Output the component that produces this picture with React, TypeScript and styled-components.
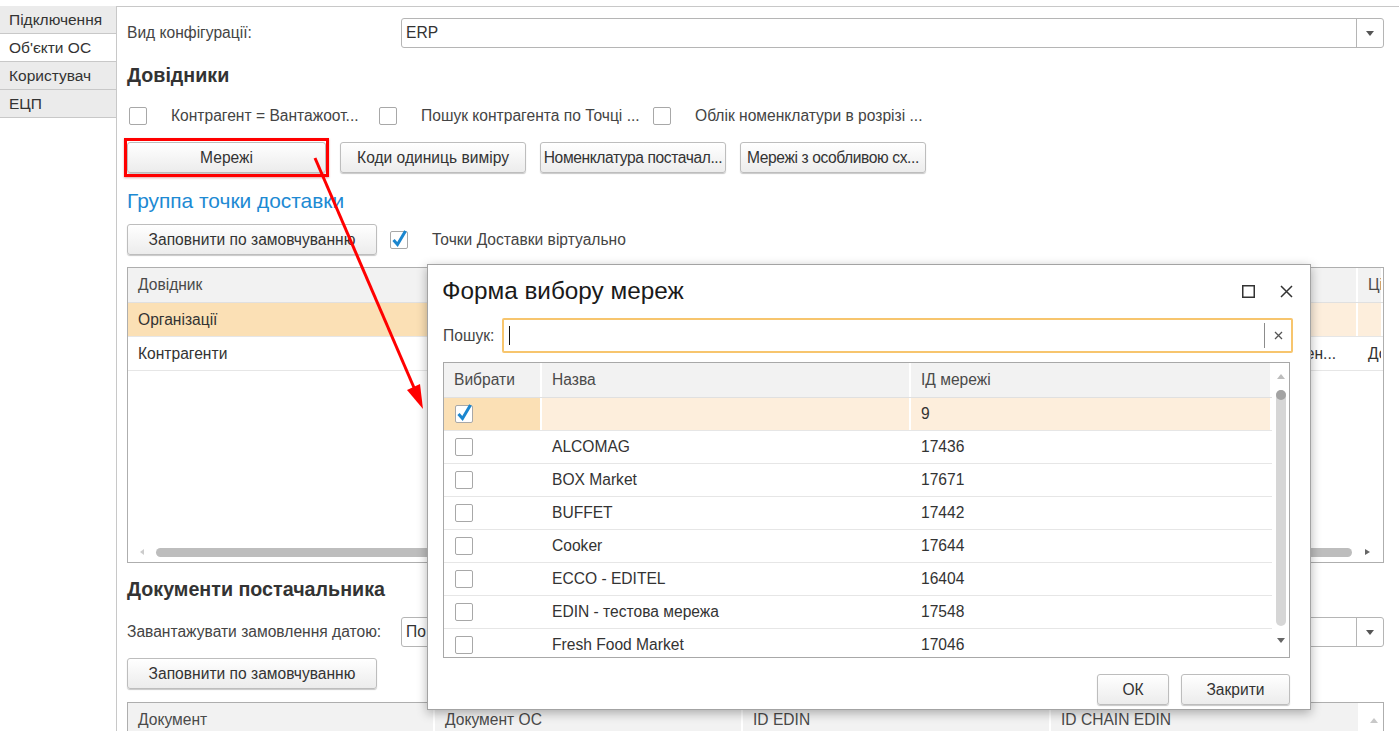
import React from "react";
import styled, { createGlobalStyle } from "styled-components";

const GlobalStyle = createGlobalStyle`
  html, body { margin: 0; padding: 0; background: #fff; }
  body { font-family: "Liberation Sans", Arial, sans-serif; font-size: 15.6px; color: #404040; }
  * { box-sizing: border-box; }
`;

const Page = styled.div`
  position: relative;
  width: 1399px;
  height: 731px;
  overflow: hidden;
  display: flex;
  padding-top: 6px;
  background: #fff;
`;

const TabColumn = styled.nav`
  width: 116px;
  flex: none;
  display: flex;
  flex-direction: column;
`;

const Tab = styled.div<{ $active?: boolean }>`
  height: 28px;
  display: flex;
  align-items: center;
  padding-left: 9px;
  font-size: 15.5px;
  color: #333;
  background: ${(p) => (p.$active ? "#fff" : "#ebebeb")};
  border-bottom: 1px solid #c8c8c8;
`;

const Main = styled.main`
  flex: 1;
  min-width: 0;
  border-left: 1px solid #c8c8c8;
  border-top: 1px solid #c8c8c8;
  padding: 11px 15px 0 10px;
  display: flex;
  flex-direction: column;
`;

const FieldRow = styled.div<{ $mt?: number }>`
  display: flex;
  align-items: center;
  height: 30px;
  flex: none;
  margin-top: ${(p) => p.$mt ?? 0}px;
`;

const FieldLabel = styled.span`
  width: 274px;
  flex: none;
  color: #444;
`;

const Select = styled.div`
  flex: 1;
  height: 30px;
  display: flex;
  border: 1px solid #b5b5b5;
  border-radius: 3px;
  background: #fff;
`;

const SelectText = styled.span`
  flex: 1;
  display: flex;
  align-items: center;
  padding-left: 4px;
  color: #333;
`;

const SelectButton = styled.span`
  width: 27px;
  flex: none;
  border-left: 1px solid #b5b5b5;
  display: flex;
  align-items: center;
  justify-content: center;
`;

const TriDown = styled.span<{ $color?: string }>`
  width: 0;
  height: 0;
  border-left: 4px solid transparent;
  border-right: 4px solid transparent;
  border-top: 5px solid ${(p) => p.$color ?? "#555"};
`;

const TriUp = styled.span<{ $color?: string }>`
  width: 0;
  height: 0;
  border-left: 4px solid transparent;
  border-right: 4px solid transparent;
  border-bottom: 5px solid ${(p) => p.$color ?? "#bbb"};
`;

const TriLeft = styled.span<{ $color?: string }>`
  width: 0;
  height: 0;
  border-top: 3px solid transparent;
  border-bottom: 3px solid transparent;
  border-right: 4px solid ${(p) => p.$color ?? "#ccc"};
`;

const TriRight = styled.span<{ $color?: string }>`
  width: 0;
  height: 0;
  border-top: 3px solid transparent;
  border-bottom: 3px solid transparent;
  border-left: 5px solid ${(p) => p.$color ?? "#666"};
`;

const SectionTitle = styled.h2<{ $mt?: number }>`
  margin: ${(p) => p.$mt ?? 0}px 0 0 0;
  font-size: 19.7px;
  line-height: 22px;
  font-weight: bold;
  color: #333;
  flex: none;
`;

const GroupTitle = styled.h3<{ $mt?: number }>`
  margin: ${(p) => p.$mt ?? 0}px 0 0 0;
  font-size: 20.9px;
  line-height: 24px;
  font-weight: normal;
  color: #1d8ad3;
  flex: none;
`;

const CheckRow = styled.div<{ $mt?: number }>`
  display: flex;
  align-items: center;
  height: 24px;
  flex: none;
  margin-top: ${(p) => p.$mt ?? 0}px;
  padding-left: 2px;
`;

const CheckItem = styled.label<{ $w?: number }>`
  display: flex;
  align-items: center;
  gap: 24px;
  width: ${(p) => (p.$w ? `${p.$w}px` : "auto")};
  flex: none;
  color: #444;
  white-space: nowrap;
`;

const Box = styled.span`
  position: relative;
  width: 18px;
  height: 18px;
  flex: none;
  border: 1px solid #a8a8a8;
  border-radius: 2px;
  background: #fff;
`;

const Tick = styled.svg`
  position: absolute;
  left: -1px;
  top: -1px;
  overflow: visible;
`;

const CheckBox: React.FC<{ checked?: boolean }> = ({ checked }) => (
  <Box>
    {checked && (
      <Tick width="18" height="18" viewBox="0 0 18 18">
        <path d="M3.5 9 L7.5 13.5 L15.5 0" fill="none" stroke="#1b86cf" strokeWidth="3" strokeLinejoin="miter" />
      </Tick>
    )}
  </Box>
);

const ButtonRow = styled.div<{ $mt?: number; $gap?: number }>`
  display: flex;
  align-items: center;
  gap: ${(p) => p.$gap ?? 14}px;
  flex: none;
  margin-top: ${(p) => p.$mt ?? 0}px;
`;

const Button = styled.button<{ $w: number; $mt?: number; $tight?: boolean }>`
  width: ${(p) => p.$w}px;
  height: 31px;
  flex: none;
  margin-top: ${(p) => p.$mt ?? 0}px;
  padding: 0 2px;
  border: 1px solid #bdbdbd;
  border-radius: 3px;
  background: linear-gradient(#ffffff, #ececec);
  box-shadow: 0 1px 1px rgba(0, 0, 0, 0.22);
  font-family: "Liberation Sans", Arial, sans-serif;
  font-size: 15.6px;
  letter-spacing: ${(p) => (p.$tight ? "-0.4px" : "normal")};
  color: #333;
  white-space: nowrap;
  overflow: hidden;
  text-align: center;
`;

const Highlighted = styled.div`
  position: relative;
  flex: none;
  display: flex;
`;

const RedFrame = styled.span`
  position: absolute;
  left: -3px;
  top: -4px;
  right: -3px;
  bottom: -4px;
  border: 3px solid #ff0000;
  box-shadow: 0 1px 2px rgba(160, 0, 0, 0.35);
  pointer-events: none;
`;

const Grid = styled.div<{ $h?: number; $mt?: number }>`
  flex: none;
  margin-top: ${(p) => p.$mt ?? 0}px;
  height: ${(p) => (p.$h ? `${p.$h}px` : "auto")};
  border: 1px solid #aeaeae;
  background: #fff;
  display: flex;
  flex-direction: column;
  overflow: hidden;
`;

const HeaderRow = styled.div<{ $cols: string }>`
  display: grid;
  grid-template-columns: ${(p) => p.$cols};
  height: 35px;
  flex: none;
  border-bottom: 1px solid #e0e0e0;
`;

const HeaderCell = styled.div<{ $plain?: boolean }>`
  display: flex;
  align-items: center;
  padding-left: 10px;
  background: ${(p) => (p.$plain ? "#fff" : "#f2f2f2")};
  border-right: 2px solid #fff;
  color: #4a4a4a;
  white-space: nowrap;
  overflow: hidden;
`;

const DataRow = styled.div<{ $cols: string; $h?: number }>`
  display: grid;
  grid-template-columns: ${(p) => p.$cols};
  height: ${(p) => p.$h ?? 34}px;
  flex: none;
  border-bottom: 1px solid #e6e6e6;
`;

const Cell = styled.div<{ $bg?: string; $pl?: number }>`
  display: flex;
  align-items: center;
  padding-left: ${(p) => p.$pl ?? 10}px;
  background: ${(p) => p.$bg ?? "transparent"};
  border-right: 2px solid #fff;
  color: #333;
  white-space: nowrap;
  overflow: hidden;
`;

const GridBody = styled.div`
  flex: 1;
  display: flex;
  flex-direction: column;
  overflow: hidden;
`;

const HScroll = styled.div`
  height: 20px;
  flex: none;
  display: grid;
  grid-template-columns: 28px 1fr 31px;
  align-items: center;
  justify-items: center;
`;

const HThumb = styled.span`
  justify-self: stretch;
  height: 9px;
  border-radius: 5px;
  background: #bdbdbd;
`;

/* Dialog */
const Dialog = styled.section`
  position: absolute;
  left: 427px;
  top: 264px;
  width: 884px;
  height: 446px;
  background: #fff;
  border: 1px solid #a3a3a3;
  box-shadow: 0 3px 10px rgba(0, 0, 0, 0.3);
  display: flex;
  flex-direction: column;
  padding: 0 17px 0 15px;
  z-index: 2;
`;

const TitleBar = styled.header`
  height: 52px;
  flex: none;
  display: flex;
  align-items: center;
`;

const DialogTitle = styled.h1`
  margin: 0 0 0 -1px;
  flex: 1;
  font-size: 24.3px;
  font-weight: normal;
  color: #1a1a1a;
`;

const TitleIcons = styled.div`
  display: flex;
  align-items: center;
  gap: 25px;
`;

const SearchRow = styled.div`
  margin-top: 1px;
  height: 35px;
  flex: none;
  display: flex;
  align-items: center;
`;

const SearchLabel = styled.span`
  width: 59px;
  flex: none;
  color: #444;
`;

const SearchInput = styled.div`
  flex: 1;
  height: 35px;
  display: flex;
  align-items: center;
  border: 2px solid #f7c56d;
  border-radius: 2px;
`;

const Caret = styled.span`
  width: 1px;
  height: 19px;
  margin-left: 5px;
  background: #111;
`;

const Spacer = styled.span`
  flex: 1;
`;

const ClearBtn = styled.span`
  width: 27px;
  height: 25px;
  flex: none;
  border-left: 1px solid #8c8c8c;
  display: flex;
  align-items: center;
  justify-content: center;
`;

const PickTable = styled.div`
  margin: 9px 3px 0 0;
  height: 296px;
  flex: none;
  border: 1px solid #a8a8a8;
  display: flex;
  overflow: hidden;
`;

const PickMain = styled.div`
  flex: 1;
  display: flex;
  flex-direction: column;
  overflow: hidden;
`;

const VScroll = styled.div`
  width: 17px;
  flex: none;
  display: flex;
  flex-direction: column;
  align-items: center;
  padding-top: 11px;
`;

const VThumb = styled.span`
  position: relative;
  width: 10px;
  height: 236px;
  margin: 11px 0 12px;
  border-radius: 5px;
  background: #d6d6d6;
  &::before {
    content: "";
    position: absolute;
    left: 0;
    top: 0;
    width: 10px;
    height: 10px;
    border-radius: 50%;
    background: #a3a3a3;
  }
`;

const Footer = styled.footer`
  margin: 16px 3px 0 0;
  display: flex;
  justify-content: flex-end;
  gap: 12px;
`;

const Overlay = styled.svg`
  position: absolute;
  left: 0;
  top: 0;
  pointer-events: none;
  z-index: 3;
`;

const topCols = "420px 600px 210px 1fr";
const botCols = "307px 308px 308px 309px 1fr";
const pickCols = "98px 369px 361px";

const networks: [string, string][] = [
  ["ALCOMAG", "17436"],
  ["BOX Market", "17671"],
  ["BUFFET", "17442"],
  ["Cooker", "17644"],
  ["ECCO - EDITEL", "16404"],
  ["EDIN - тестова мережа", "17548"],
  ["Fresh Food Market", "17046"],
];

const SEL_FIRST = "#fbe0b5";
const SEL_REST = "#fdeedc";

export default function App() {
  return (
    <>
      <GlobalStyle />
      <Page>
        <TabColumn>
          <Tab>Підключення</Tab>
          <Tab $active>Об'єкти ОС</Tab>
          <Tab>Користувач</Tab>
          <Tab>ЕЦП</Tab>
        </TabColumn>

        <Main>
          <FieldRow>
            <FieldLabel>Вид конфігурації:</FieldLabel>
            <Select>
              <SelectText>ERP</SelectText>
              <SelectButton>
                <TriDown />
              </SelectButton>
            </Select>
          </FieldRow>

          <SectionTitle $mt={16}>Довідники</SectionTitle>

          <CheckRow $mt={18}>
            <CheckItem $w={250}>
              <CheckBox />
              Контрагент = Вантажоот...
            </CheckItem>
            <CheckItem $w={274}>
              <CheckBox />
              Пошук контрагента по Точці ...
            </CheckItem>
            <CheckItem>
              <CheckBox />
              Облік номенклатури в розрізі ...
            </CheckItem>
          </CheckRow>

          <ButtonRow $mt={14}>
            <Highlighted>
              <Button $w={199}>Мережі</Button>
              <RedFrame />
            </Highlighted>
            <Button $w={186}>Коди одиниць виміру</Button>
            <Button $w={186} $tight>
              Номенклатура постачал...
            </Button>
            <Button $w={186} $tight>
              Мережі з особливою сх...
            </Button>
          </ButtonRow>

          <GroupTitle $mt={16}>Группа точки доставки</GroupTitle>

          <ButtonRow $mt={11} $gap={13}>
            <Button $w={250}>Заповнити по замовчуванню</Button>
            <CheckItem>
              <CheckBox checked />
              Точки Доставки віртуально
            </CheckItem>
          </ButtonRow>

          <Grid $mt={12} $h={296}>
            <HeaderRow $cols={topCols}>
              <HeaderCell>Довідник</HeaderCell>
              <HeaderCell />
              <HeaderCell />
              <HeaderCell>Ціна</HeaderCell>
            </HeaderRow>
            <GridBody>
              <DataRow $cols={topCols}>
                <Cell $bg={SEL_FIRST}>Організації</Cell>
                <Cell $bg={SEL_REST} />
                <Cell $bg={SEL_REST} />
                <Cell $bg={SEL_REST} />
              </DataRow>
              <DataRow $cols={topCols}>
                <Cell>Контрагенти</Cell>
                <Cell />
                <Cell>Автоматично визначен...</Cell>
                <Cell>Договір</Cell>
              </DataRow>
            </GridBody>
            <HScroll>
              <TriLeft />
              <HThumb />
              <TriRight />
            </HScroll>
          </Grid>

          <SectionTitle $mt={15}>Документи постачальника</SectionTitle>

          <FieldRow $mt={17}>
            <FieldLabel>Завантажувати замовлення датою:</FieldLabel>
            <Select>
              <SelectText>По даті документа</SelectText>
              <SelectButton>
                <TriDown />
              </SelectButton>
            </Select>
          </FieldRow>

          <Button $w={250} $mt={11}>
            Заповнити по замовчуванню
          </Button>

          <Grid $mt={13}>
            <HeaderRow $cols={botCols}>
              <HeaderCell>Документ</HeaderCell>
              <HeaderCell>Документ ОС</HeaderCell>
              <HeaderCell>ID EDIN</HeaderCell>
              <HeaderCell>ID CHAIN EDIN</HeaderCell>
              <HeaderCell $plain>
                <TriUp $color="#c8c8c8" />
              </HeaderCell>
            </HeaderRow>
          </Grid>
        </Main>

        <Dialog>
          <TitleBar>
            <DialogTitle>Форма вибору мереж</DialogTitle>
            <TitleIcons>
              <svg width="13" height="13" viewBox="0 0 13 13">
                <rect x="0.75" y="0.75" width="11.5" height="11.5" fill="none" stroke="#333" strokeWidth="1.5" />
              </svg>
              <svg width="13" height="13" viewBox="0 0 13 13">
                <path d="M1 1 L12 12 M12 1 L1 12" stroke="#333" strokeWidth="1.5" />
              </svg>
            </TitleIcons>
          </TitleBar>

          <SearchRow>
            <SearchLabel>Пошук:</SearchLabel>
            <SearchInput>
              <Caret />
              <Spacer />
              <ClearBtn>
                <svg width="9" height="9" viewBox="0 0 9 9">
                  <path d="M1 1 L8 8 M8 1 L1 8" stroke="#555" strokeWidth="1.3" />
                </svg>
              </ClearBtn>
            </SearchInput>
          </SearchRow>

          <PickTable>
            <PickMain>
              <HeaderRow $cols={pickCols}>
                <HeaderCell>Вибрати</HeaderCell>
                <HeaderCell>Назва</HeaderCell>
                <HeaderCell>ІД мережі</HeaderCell>
              </HeaderRow>
              <DataRow $cols={pickCols} $h={33}>
                <Cell $bg={SEL_FIRST} $pl={11}>
                  <CheckBox checked />
                </Cell>
                <Cell $bg={SEL_REST} />
                <Cell $bg={SEL_REST}>9</Cell>
              </DataRow>
              {networks.map(([name, id]) => (
                <DataRow key={name} $cols={pickCols} $h={33}>
                  <Cell $pl={11}>
                    <CheckBox />
                  </Cell>
                  <Cell>{name}</Cell>
                  <Cell>{id}</Cell>
                </DataRow>
              ))}
            </PickMain>
            <VScroll>
              <TriUp $color="#bdbdbd" />
              <VThumb />
              <TriDown $color="#666" />
            </VScroll>
          </PickTable>

          <Footer>
            <Button $w={72}>ОК</Button>
            <Button $w={109}>Закрити</Button>
          </Footer>
        </Dialog>

        <Overlay width="1399" height="731" viewBox="0 0 1399 731">
          <line x1="315" y1="158" x2="415" y2="390" stroke="#ff0000" strokeWidth="3" />
          <polygon points="423,409 407,390 420,384" fill="#ff0000" />
        </Overlay>
      </Page>
    </>
  );
}
